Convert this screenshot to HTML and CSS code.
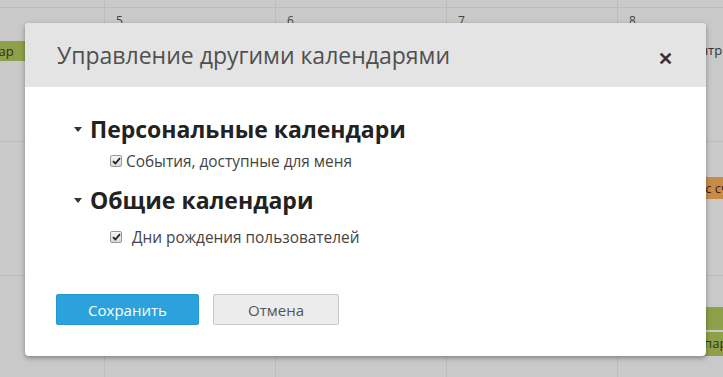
FILE: index.html
```html
<html>
<head>
    <title>Календарь</title>
    <meta charset="utf-8">
    <link rel="stylesheet" href="styles.css">
</head>
<body>
    <div class="calendar">
        <div class="cell top"></div>
        <div class="cell top"></div>
        <div class="cell top"></div>
        <div class="cell top"></div>
        <div class="cell top"></div>

        <div class="cell"><div class="chip green first">Семинар</div></div>
        <div class="cell"><span class="day">5</span></div>
        <div class="cell"><span class="day">6</span></div>
        <div class="cell"><span class="day">7</span></div>
        <div class="cell"><span class="day">8</span><div class="plain">Центр</div></div>

        <div class="cell"></div>
        <div class="cell"></div>
        <div class="cell"></div>
        <div class="cell"></div>
        <div class="cell"><div class="chip orange">Сверка с счетами</div></div>

        <div class="cell"></div>
        <div class="cell"></div>
        <div class="cell"></div>
        <div class="cell"></div>
        <div class="cell"><div class="chip green bar"></div><div class="chip green tall">Встреча с партнёрами</div></div>
    </div>

    <div class="dialog">
        <div class="dialog-head">
            <span class="dialog-title">Управление другими календарями</span>
            <span class="close">&#x2715;</span>
        </div>
        <div class="dialog-body">
            <h3 class="group-title"><span class="caret"></span>Персональные календари</h3>
            <label class="check">
                <span class="box"><svg width="9" height="8" viewBox="0 0 9 8"><path d="M1 4.2 L3.4 6.5 L8 1.2" fill="none" stroke="#222" stroke-width="1.8"/></svg></span>
                События, доступные для меня
            </label>
            <h3 class="group-title second"><span class="caret"></span>Общие календари</h3>
            <label class="check wide">
                <span class="box"><svg width="9" height="8" viewBox="0 0 9 8"><path d="M1 4.2 L3.4 6.5 L8 1.2" fill="none" stroke="#222" stroke-width="1.8"/></svg></span>
                Дни рождения пользователей
            </label>
            <div class="buttons">
                <button class="btn save">Сохранить</button>
                <button class="btn cancel">Отмена</button>
            </div>
        </div>
    </div>
</body>
</html>
```

FILE: styles.css
```css
body {
    margin: 0;
    background-color: #c9c9c9;
    font-family: "Open Sans", "Noto Sans", sans-serif;
    overflow: hidden;
    width: 723px;
    height: 377px;
}

.calendar {
    display: grid;
    grid-template-columns: 105px 171px 171px 171px 171px;
    grid-template-rows: 8px 134px 134px 110px;
}

.cell {
    border-right: 1px solid #bcbcbc;
    border-bottom: 1px solid #bcbcbc;
    overflow: hidden;
    white-space: nowrap;
}

.day {
    display: block;
    padding: 4px 0 0 11px;
    font-size: 12px;
    color: #444;
}

.chip {
    height: 20px;
    line-height: 20px;
    font-size: 13px;
    color: #2e3318;
    white-space: nowrap;
}

.green { background-color: #8fa04a; }
.orange { background-color: #c98c48; color: #3a2510; }

.first {
    margin-top: 33px;
    width: 200px;
    text-indent: -43px;
}

.plain {
    margin-top: 12px;
    padding-left: 65px;
    font-size: 13px;
    color: #333;
}

.orange {
    margin: 35px 0 0 6px;
    padding-left: 33px;
    height: 22px;
    line-height: 22px;
}

.bar {
    margin: 31px 0 0 6px;
    height: 23px;
}

.tall {
    margin: 2px 0 0 6px;
    height: 24px;
    line-height: 22px;
    padding-left: 16px;
}

.dialog {
    position: absolute;
    left: 25px;
    top: 23px;
    width: 681px;
    height: 333px;
    background-color: #fff;
    border-radius: 4px;
    box-shadow: 0 2px 5px rgba(0, 0, 0, 0.35);
    overflow: hidden;
}

.dialog-head {
    height: 64px;
    background-color: #e4e4e4;
    display: flex;
    align-items: center;
    justify-content: space-between;
    padding: 0 33px 0 32px;
}

.dialog-title {
    font-size: 23px;
    color: #505050;
}

.close {
    font-size: 18px;
    font-weight: bold;
    color: #333;
    margin-top: 6px;
}

.dialog-body {
    padding: 27px 0 0 48px;
}

.group-title {
    margin: 0;
    font-size: 23px;
    font-weight: bold;
    color: #222;
    line-height: 30px;
    height: 30px;
    display: flex;
    align-items: center;
}

.group-title.second {
    margin-top: 14px;
}

.caret {
    width: 0;
    height: 0;
    border-left: 4px solid transparent;
    border-right: 4px solid transparent;
    border-top: 5px solid #333;
    margin: 0 8px 0 1px;
}

.check {
    display: flex;
    align-items: center;
    margin: 7px 0 0 37px;
    font-size: 15.4px;
    color: #444;
    height: 20px;
}

.box {
    width: 10px;
    height: 10px;
    border: 1px solid #9a9a9a;
    border-radius: 2px;
    background: linear-gradient(#f6f6f6, #d8d8d8);
    display: flex;
    align-items: center;
    justify-content: center;
    margin-right: 4px;
}

.check.wide {
    margin-top: 12px;
}

.check.wide .box {
    margin-right: 10px;
}

.buttons {
    display: flex;
    gap: 14px;
    margin: 47px 0 0 -17px;
}

.btn {
    height: 31px;
    border-radius: 2px;
    font-family: "Open Sans", sans-serif;
    font-size: 15px;
}

.save {
    width: 143px;
    background-color: #2ba2dc;
    border: 1px solid #2597d0;
    color: #fff;
}

.cancel {
    width: 126px;
    background-color: #ececec;
    border: 1px solid #c8c8c8;
    color: #555;
}
```
